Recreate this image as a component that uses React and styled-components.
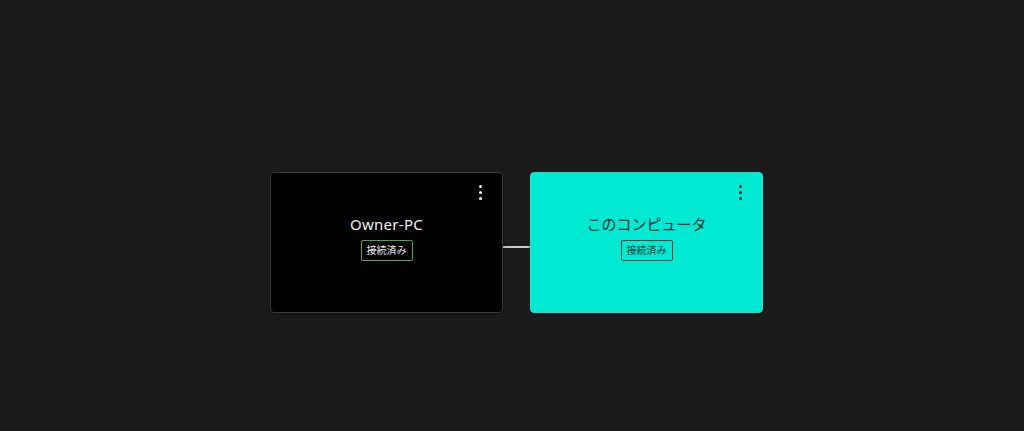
import React from "react";
import styled, { createGlobalStyle } from "styled-components";

const Global = createGlobalStyle`
  html, body { margin: 0; padding: 0; background: #1b1b1b; }
  body { font-family: "Noto Sans", "Noto Sans CJK JP", sans-serif; }
`;

const Canvas = styled.div`
  width: 1024px;
  height: 431px;
  background: #1b1b1b;
  display: flex;
  align-items: flex-start;
  padding: 172px 0 0 270px;
  box-sizing: border-box;
`;

const Row = styled.div`
  display: flex;
  align-items: center;
`;

const Node = styled.div`
  position: relative;
  width: 233px;
  height: 141px;
  box-sizing: border-box;
  border-radius: 4px;
  background: ${(p) => (p.$self ? "#00e9d2" : "#000")};
  border: 1px solid ${(p) => (p.$self ? "#00e9d2" : "#3c3c3c")};
  box-shadow: 0 1px 3px rgba(0, 0, 0, 0.5);
  display: flex;
  flex-direction: column;
  align-items: center;
  padding-top: 40px;
  color: ${(p) => (p.$self ? "#0b2f2b" : "#f2f2f2")};
`;

const Title = styled.div`
  font-size: 15px;
  line-height: 22px;
  font-weight: 400;
  letter-spacing: ${(p) => (p.$self ? "0" : "0.3px")};
`;

const Badge = styled.div`
  margin-top: 5px;
  height: 21px;
  padding: 0 5px;
  box-sizing: border-box;
  border: 1px solid ${(p) => (p.$self ? "#0a3b36" : "#3fae44")};
  border-radius: 2px;
  font-size: 10px;
  line-height: 19px;
  color: ${(p) => (p.$self ? "#0b3a35" : "#e6e6ef")};
`;

const Menu = styled.div`
  position: absolute;
  top: 12px;
  right: 20px;
  display: flex;
  flex-direction: column;
  gap: 3px;
  span {
    width: 3px;
    height: 3px;
    border-radius: 50%;
    background: ${(p) => (p.$self ? "#062a26" : "#f4f4f4")};
  }
`;

const Link = styled.div`
  width: 27px;
  height: 2px;
  background: #c9c9c9;
  margin-top: 8px;
`;

function Card({ self, title }) {
  return (
    <Node $self={self}>
      <Menu $self={self}>
        <span />
        <span />
        <span />
      </Menu>
      <Title $self={self}>{title}</Title>
      <Badge $self={self}>接続済み</Badge>
    </Node>
  );
}

export default function App() {
  return (
    <>
      <Global />
      <Canvas>
        <Row>
          <Card title="Owner-PC" />
          <Link />
          <Card self title="このコンピュータ" />
        </Row>
      </Canvas>
    </>
  );
}
